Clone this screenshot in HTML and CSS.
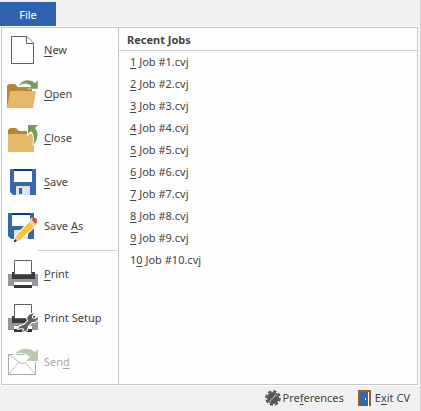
FILE: index.html
```
<!DOCTYPE html>
<html lang="en">
<head>
<meta charset="utf-8">
<title>File menu</title>
<link rel="stylesheet" href="styles.css">
</head>
<body>
<header class="tabs"><button class="tab" type="button">File</button></header>
<main class="panel">
  <nav class="commands" aria-label="File commands">
    <button class="command" type="button">
      <svg class="icon" viewBox="0 0 40 44" aria-hidden="true"><path d="M9.500 8.500H25L31.500 15V35.500H9.500Z" fill="#fff" stroke="#606060"/><path d="M24.500 8.500V15.500H31.500" fill="#fff" stroke="#606060"/></svg>
      <span><u>N</u>ew</span>
    </button>
    <button class="command" type="button">
      <svg class="icon" viewBox="0 0 40 44" aria-hidden="true"><path d="M5 36V13.500L7 12H13L16 15H30V20L10 36Z" fill="#b58838"/><path d="M8 19H34L31 36H5Z" fill="#e5b766"/><path d="M16 15C20 6 29 7 33 11L36 8V17H26L29 14C25 11 20 11 16 15Z" fill="#76995d" stroke="#fdfdfd" stroke-width=".5"/></svg>
      <span><u>O</u>pen</span>
    </button>
    <button class="command" type="button">
      <svg class="icon" viewBox="0 0 40 44" aria-hidden="true"><path d="M6 36V14L8 12H14L17 15H26V19H6Z" fill="#b58838"/><path d="M6 18H32V36H6Z" fill="#e5b766"/><path d="M26 9H36L33 12C37 17 36 24 31 29C33 23 32 18 29 15L26 18Z" fill="#76995d" stroke="#fdfdfd" stroke-width="2" paint-order="stroke"/></svg>
      <span><u>C</u>lose</span>
    </button>
    <button class="command" type="button">
      <svg class="icon" viewBox="0 0 40 44" aria-hidden="true"><path d="M8 9H34V35H11L8 32Z" fill="#3468a8"/><path d="M12 9H30V11H12Z" fill="#003b91"/><path d="M12 11H30V22H12Z" fill="#fff"/><path d="M14 26H28V35H14Z" fill="#e0e2e2"/><path d="M17 28H20V34H17Z" fill="#3468a8"/></svg>
      <span><u>S</u>ave</span>
    </button>
    <button class="command" type="button">
      <svg class="icon" viewBox="0 0 40 44" aria-hidden="true"><path d="M6 9H32V35H9L6 32Z" fill="#3468a8"/><path d="M10 9H28V11H10Z" fill="#003b91"/><path d="M10 11H28V22H10Z" fill="#fff"/><path d="M12 26H26V35H12Z" fill="#e0e2e2"/><path d="M12 38L14 32L30 15L35 20L18 36Z" fill="#fdc536" stroke="#fff" stroke-width="2" paint-order="stroke"/><path d="M14 32L18 36L12 38Z" fill="#efc795"/><path d="M13 35L15 37L11.500 38.500Z" fill="#222"/><path d="M27 18L29 16L33.500 20.500L31.500 22.500Z" fill="#d9dce0"/><path d="M29.500 15.500L31 14H34L35 16V18L33.500 20Z" fill="#d54a37"/></svg>
      <span>Save <u>A</u>s</span>
    </button>
    <hr class="separator">
    <button class="command" type="button">
      <svg class="icon" viewBox="0 0 40 44" aria-hidden="true"><path d="M6 22H36V34H6Z" fill="#94959d"/><path d="M10 20H33V27H10Z" fill="#3a3a3c"/><path d="M12.500 8.500H29.500V22.500H12.500Z" fill="#fff" stroke="#606060"/><path d="M12 30H30V36H12Z" fill="#fff"/><path d="M12 33H30V36H12Z" fill="#343436"/></svg>
      <span><u>P</u>rint</span>
    </button>
    <button class="command" type="button">
      <svg class="icon" viewBox="0 0 40 44" aria-hidden="true"><path d="M6 22H36V34H6Z" fill="#94959d"/><path d="M10 20H33V27H10Z" fill="#3a3a3c"/><path d="M12.500 8.500H29.500V22.500H12.500Z" fill="#fff" stroke="#606060"/><path d="M12 30H30V36H12Z" fill="#fff"/><path d="M12 33H30V36H12Z" fill="#343436"/><path d="M32 17L27 19L25 22L26 25L22 29L18 30L16 33L20 32L22 33L21 36L25 34L26 30L30 26H33L36 23V21L33 23L30 22L30 20Z" fill="#606164" stroke="#fdfdfd" stroke-width="2" stroke-linejoin="round" paint-order="stroke"/></svg>
      <span>Print Setup</span>
    </button>
    <button class="command" type="button" disabled>
      <svg class="icon" viewBox="0 0 40 44" aria-hidden="true"><path d="M6.500 14.500H33.500V34.500H6.500Z" fill="#fff" stroke="#aaa"/><path d="M7 15L20 24L33 15M7 34L17 22M33 34L23 22" fill="none" stroke="#bbb"/><path d="M13 14C18 7 28 8 33 12L36 9V21H24L28 17C24 13 18 12 13 14Z" fill="#b9cbac" stroke="#fdfdfd" stroke-width="2" paint-order="stroke"/></svg>
      <span>Sen<u>d</u></span>
    </button>
  </nav>
  <section class="recent">
    <h1 class="heading">Recent Jobs</h1>
    <ul class="jobs">
      <li><a class="job" href="#"><u>1</u> Job #1.cvj</a></li>
      <li><a class="job" href="#"><u>2</u> Job #2.cvj</a></li>
      <li><a class="job" href="#"><u>3</u> Job #3.cvj</a></li>
      <li><a class="job" href="#"><u>4</u> Job #4.cvj</a></li>
      <li><a class="job" href="#"><u>5</u> Job #5.cvj</a></li>
      <li><a class="job" href="#"><u>6</u> Job #6.cvj</a></li>
      <li><a class="job" href="#"><u>7</u> Job #7.cvj</a></li>
      <li><a class="job" href="#"><u>8</u> Job #8.cvj</a></li>
      <li><a class="job" href="#"><u>9</u> Job #9.cvj</a></li>
      <li><a class="job" href="#">1<u>0</u> Job #10.cvj</a></li>
    </ul>
  </section>
</main>
<footer class="actions">
  <button class="action" type="button">
    <svg class="small-icon" viewBox="0 0 16 16" aria-hidden="true"><circle cx="8" cy="8" r="6" fill="#555"/><circle cx="8" cy="8" r="6.800" fill="none" stroke="#555" stroke-width="2" stroke-dasharray="3.340 2"/><path d="M5 11L11 5" stroke="#999" stroke-width="1.500"/><path d="M3.500 11.500L5.500 10.500L5 13M10.500 3.500L10 6L12.500 5.500" fill="none" stroke="#999"/></svg>
    <span>Pre<u>f</u>erences</span>
  </button>
  <button class="action" type="button">
    <svg class="small-icon" viewBox="0 0 16 16" aria-hidden="true"><path d="M1 0H14V16H1Z" fill="#a35a20"/><path d="M3 2H12V16H3Z" fill="#fff"/><path d="M3 2H11V16H3Z" fill="#3468a8"/><path d="M8 8H9V10H8Z" fill="#fff"/></svg>
    <span>E<u>x</u>it CV</span>
  </button>
</footer>
</body>
</html>
```
FILE: styles.css
```
* { box-sizing: border-box; }

body {
  min-height: 100vh;
  margin: 0;
  padding-top: 2px;
  border-right: 1px solid #d4d4d4;
  background: #f0f0f0;
  color: #444;
  font: 11px/16px "Noto Sans", sans-serif;
}

button {
  margin: 0;
  padding: 0;
  border: 0;
  background: none;
  color: inherit;
  font: inherit;
  text-align: left;
}

u { text-underline-offset: 2px; text-decoration-skip-ink: none; }

.tabs { display: flex; }

.tab {
  width: 56px;
  height: 24px;
  padding-top: 2px;
  background: #2f63b0;
  color: #fff;
  text-align: center;
}

.panel {
  display: grid;
  grid-template-columns: 117px 1fr;
  margin: 1px 2px 0 1px;
  border: 1px solid #c8c8c8;
  outline: 1px solid #fff;
  background: #fdfdfd;
}

.commands { border-right: 1px solid #c8c8c8; }

.command {
  display: flex;
  align-items: center;
  gap: 2px;
  width: 100%;
  height: 44px;
}

.command:disabled { color: #a8a8a8; }

.icon { flex: none; width: 40px; height: 44px; }

.separator {
  height: 1px;
  margin: 2px 1px 1px 36px;
  border: 0;
  background: #d0d0d0;
}

.heading {
  height: 23px;
  margin: 0;
  padding: 4px 8px;
  border-bottom: 1px solid #d0d0d0;
  font-size: 11px;
  line-height: 16px;
}

.jobs { margin: 0; padding: 0 11px; list-style: none; }

.job {
  display: block;
  color: inherit;
  line-height: 22px;
  text-decoration: none;
}

.actions {
  display: flex;
  justify-content: flex-end;
  gap: 13px;
  padding: 5px 10px;
}

.action { display: flex; align-items: center; gap: 2px; }

.small-icon { flex: none; width: 16px; height: 16px; }
```
